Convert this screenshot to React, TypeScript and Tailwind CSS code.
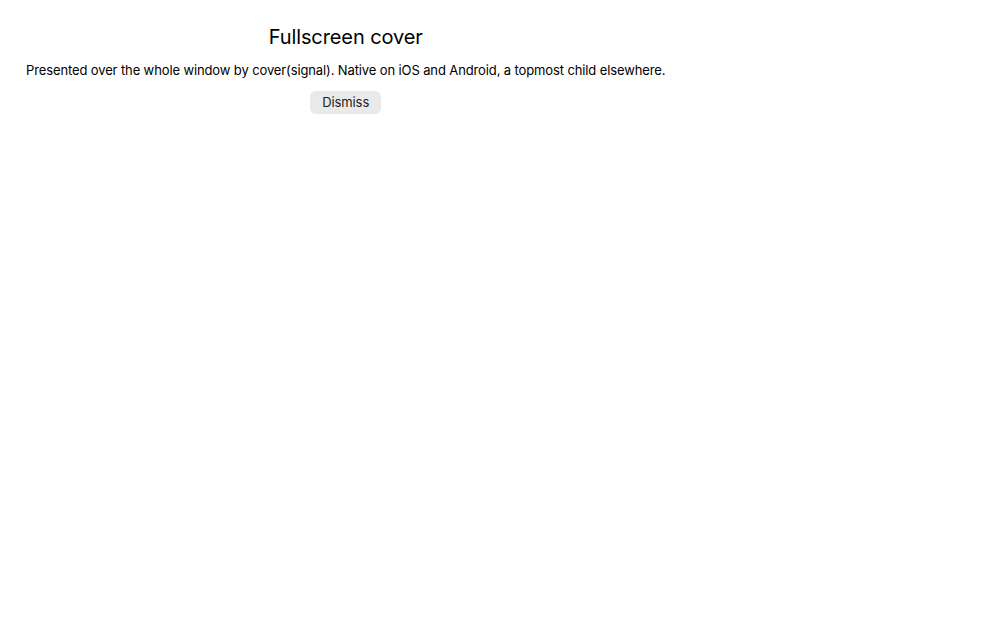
import React from "react";

export default function App() {
  return (
    <div className="min-h-screen bg-white text-black font-['Inter','Liberation_Sans',sans-serif]">
      {/* cover content */}
      <div className="w-fit flex flex-col items-center px-[26px] pt-6">
        <h1 className="text-[20px] leading-[26px] font-normal tracking-[-0.1px]">Fullscreen cover</h1>
        <p className="mt-[11px] text-[13px] leading-[18px] tracking-[-0.12px]">
          Presented over the whole window by cover(signal). Native on iOS and Android, a topmost child elsewhere.
        </p>
        <button className="mt-[12px] h-[23px] px-3 rounded-md bg-[#e9e9e9] text-[13px] text-[#222] tracking-[-0.1px]">
          Dismiss
        </button>
      </div>
    </div>
  );
}
